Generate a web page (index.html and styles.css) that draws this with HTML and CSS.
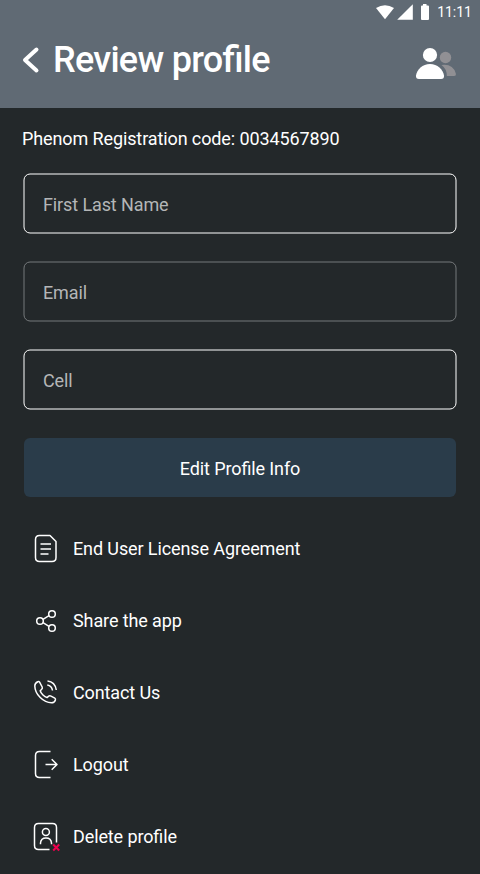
FILE: index.html
```html
<!DOCTYPE html>
<html lang="en">
<head>
<meta charset="utf-8">
<title>Review profile</title>
<link rel="stylesheet" href="styles.css">
</head>
<body>
<header class="header">
  <div class="status">
    <svg width="54" height="24" viewBox="0 0 54 24" fill="#fff">
      <path d="M1 8.1Q10 2.400 19 8.1L10 19.2Z"/>
      <path d="M37.8 4.3V19.8H22.2Z"/>
      <path d="M48 4h3.500v1.500H53q1 0 1 1V19q0 1-1 1h-6q-1 0-1-1V6.500q0-1 1-1h1Z"/>
    </svg>
    <span class="time">11:11</span>
  </div>
  <div class="bar">
    <svg class="back" width="18" height="26" viewBox="0 0 18 26"><path d="M14.500 2.500L3 13L14.500 23.500" fill="none" stroke="#fff" stroke-width="4" stroke-linecap="round" stroke-linejoin="round"/></svg>
    <h1 class="title">Review profile</h1>
    <svg class="people" width="42" height="34" viewBox="0 0 42 34">
      <g fill="#919094"><circle cx="29.500" cy="11.500" r="5.700"/><path d="M25.500 19Q37 17.500 39.800 27.500Q40.300 30 38 30H30.800Q31 23 25.500 19Z"/></g>
      <g fill="#fff"><circle cx="14" cy="9" r="7.100"/><path d="M14 18C21.500 18 27 23.500 28 29.500Q28.300 33 25 33H3Q-.3 33 0 29.500C1 23.500 6.500 18 14 18Z"/></g>
    </svg>
  </div>
</header>
<main class="content">
  <p class="code">Phenom Registration code: 0034567890</p>
  <form class="form">
    <div class="field"><svg class="outline" width="434" height="61"><rect x="1" y="1" width="432" height="59" rx="6"/></svg><span>First Last Name</span></div>
    <div class="field field-dim"><svg class="outline" width="434" height="61"><rect x="1" y="1" width="432" height="59" rx="6"/></svg><span>Email</span></div>
    <div class="field"><svg class="outline" width="434" height="61"><rect x="1" y="1" width="432" height="59" rx="6"/></svg><span>Cell</span></div>
    <button class="edit" type="button">Edit Profile Info</button>
  </form>
  <nav class="menu">
    <a class="item"><svg class="icon" viewBox="0 0 30 30"><path d="M9.500 2.500H20L26 8.500V24.500Q26 28.500 22 28.500H9.500Q5.500 28.500 5.500 24.500V6.500Q5.500 2.500 9.500 2.500ZM10.500 11h10.500M10.500 16h10.500M10.500 21h8"/></svg>End User License Agreement</a>
    <a class="item"><svg class="icon" viewBox="0 0 30 30"><circle cx="10" cy="16" r="3.300"/><circle cx="22" cy="9" r="3.300"/><circle cx="22" cy="23" r="3.300"/><path d="M13 14.300L19 10.700M13 17.700L19 21.300"/></svg>Share the app</a>
    <a class="item"><svg class="icon" viewBox="0 0 30 30"><path d="M9.600 5.100L12.200 10Q12.800 11.300 11.500 12.500L10.200 13.800C11 16.700 14.500 20 17 20.600L18.700 19.200Q19.700 18.400 21 19.100L24.800 21.100Q25.800 21.700 25.400 22.900Q24.500 25.800 21.500 25.800C13.500 25.800 5 17.500 4.800 9Q4.800 6 7.800 4.700Q9 4.200 9.600 5.100ZM17.500 4Q25 4.700 26.300 13M17.300 8Q21.800 8.700 22.500 13.500"/></svg>Contact Us</a>
    <a class="item"><svg class="icon" viewBox="0 0 30 30"><path d="M20.500 2.500H9.500Q5.500 2.500 5.500 6.500V24.500Q5.500 28.500 9.500 28.500H20.500M15.500 15.500H27M21.700 10.200L27 15.500L21.700 20.800"/></svg>Logout</a>
    <a class="item"><svg class="icon" viewBox="0 0 30 30"><path d="M19.500 28.500H8.500Q4.500 28.500 4.500 24.500V6.500Q4.500 2.500 8.500 2.500H22.500Q26.500 2.500 26.500 6.500V21.500"/><circle cx="15.900" cy="11" r="3.500"/><path d="M10.500 23.300V22Q10.900 17 16 17T21.500 22V23.300"/><path class="cross" d="M23.200 23.500L29.200 29.500M29.200 23.500L23.200 29.500"/></svg>Delete profile</a>
  </nav>
</main>
</body>
</html>
```
FILE: styles.css
```css
* { box-sizing: border-box; }
body {
  margin: 0;
  height: 874px;
  overflow: hidden;
  background: #23282a;
  color: #fff;
  font: 18px/24px Roboto, "Noto Sans", sans-serif;
  letter-spacing: -.11px;
  font-feature-settings: "liga" 1;
}
svg { display: block; flex: none; overflow: visible; }
.header { height: 108px; background: #606a74; }
.status {
  display: flex;
  justify-content: flex-end;
  gap: 8px;
  height: 24px;
  padding-right: 8px;
}
.time { font-size: 14px; line-height: 24px; letter-spacing: 0; }
.bar { display: flex; align-items: center; height: 72px; padding: 0 22px 0 22px; }
.title {
  margin: 0 0 0 13px;
  font-size: 36px;
  line-height: 42px;
  font-weight: 500;
  letter-spacing: -.72px;
}
.people { margin: 5px 0 0 auto; }
.content { padding: 18px 24px 0; }
.code { margin: 0 -2px 23px; line-height: 25px; }
.form { display: flex; flex-direction: column; gap: 29px; }
.field {
  position: relative;
  display: flex;
  align-items: center;
  height: 59px;
  padding: 3px 19px 0;
  color: #b4b6b7;
}
.outline { position: absolute; left: -1px; top: -1px; fill: none; stroke: #fff; stroke-width: 1; }
.field-dim .outline { stroke: #75797b; }
.edit {
  height: 59px;
  padding: 3px 0 0;
  border: 0;
  border-radius: 6px;
  background: #2a3c4a;
  color: #fff;
  font: inherit;
  letter-spacing: inherit;
}
.menu { padding: 16px 6px 0; }
.item { display: flex; align-items: center; gap: 13px; height: 72px; }
.icon {
  width: 30px;
  height: 30px;
  margin-bottom: 2px;
  fill: none;
  stroke: #fff;
  stroke-width: 1.5;
  stroke-linejoin: round;
}
.icon .cross { stroke: #f0004e; stroke-width: 2; }
```
